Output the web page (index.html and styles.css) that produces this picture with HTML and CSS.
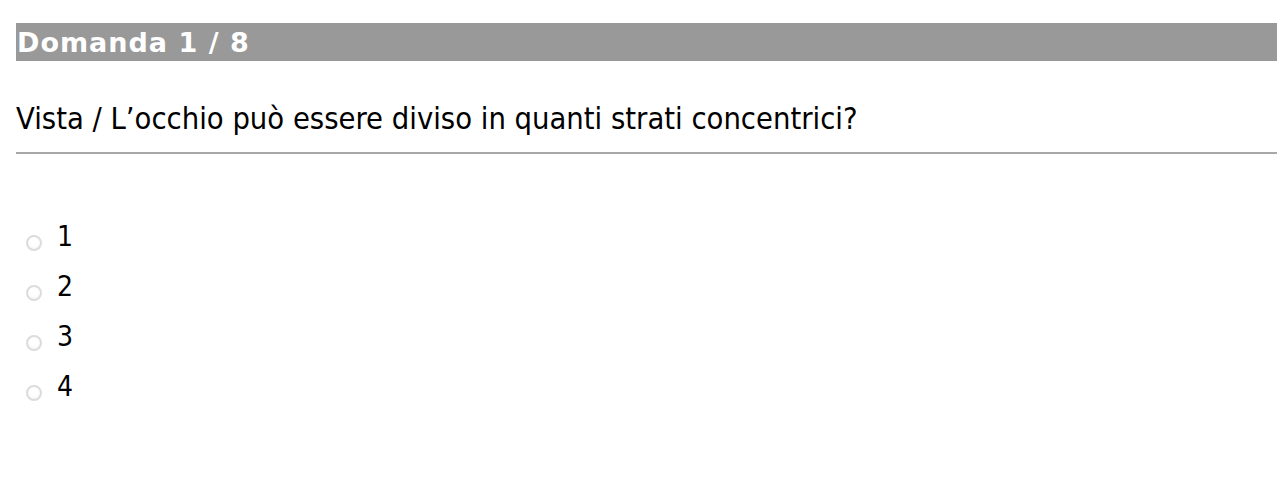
FILE: index.html
```html
<!DOCTYPE html>
<html lang="it">
<head>
<meta charset="utf-8">
<title>Domanda 1 / 8</title>
<link rel="stylesheet" href="styles.css">
</head>
<body>
<div class="quiz">
  <div class="quiz-header">Domanda 1 / 8</div>
  <div class="question">Vista / L’occhio può essere diviso in quanti strati concentrici?</div>
  <div class="rule"></div>
  <ul class="answers">
    <li class="answer"><span class="radio"></span><span class="label">1</span></li>
    <li class="answer"><span class="radio"></span><span class="label">2</span></li>
    <li class="answer"><span class="radio"></span><span class="label">3</span></li>
    <li class="answer"><span class="radio"></span><span class="label">4</span></li>
  </ul>
</div>
</body>
</html>
```
FILE: styles.css
```css
html, body {
  margin: 0;
  padding: 0;
  background: #ffffff;
}
body {
  padding: 23px 3px 0 16px;
  font-family: "DejaVu Sans Condensed", "DejaVu Sans", Verdana, sans-serif;
  color: #000;
}
.quiz {
  display: flex;
  flex-direction: column;
}
.quiz-header {
  background: #999999;
  color: #ffffff;
  font-family: "DejaVu Sans", Verdana, sans-serif;
  font-weight: bold;
  font-size: 27px;
  letter-spacing: 1px;
  line-height: 37px;
  height: 37px;
  padding: 1px 0 0 1px;
}
.question {
  margin-top: 40px;
  font-size: 30.6px;
  line-height: 36px;
}
.rule {
  margin-top: 15px;
  height: 2px;
  background: #a8a8a8;
}
.answers {
  list-style: none;
  margin: 65px 0 0 0;
  padding: 0;
  display: flex;
  flex-direction: column;
  gap: 14px;
}
.answer {
  display: flex;
  align-items: flex-start;
  height: 36px;
}
.radio {
  width: 16px;
  height: 16px;
  border-radius: 50%;
  border: 2px solid #dcdcdc;
  background: radial-gradient(circle at 50% 35%, #ffffff 40%, #f2f2f2 100%);
  margin-left: 10px;
  margin-top: 16px;
  box-sizing: border-box;
  flex: none;
}
.label {
  margin-left: 15px;
  font-size: 28px;
  line-height: 36px;
}
```
